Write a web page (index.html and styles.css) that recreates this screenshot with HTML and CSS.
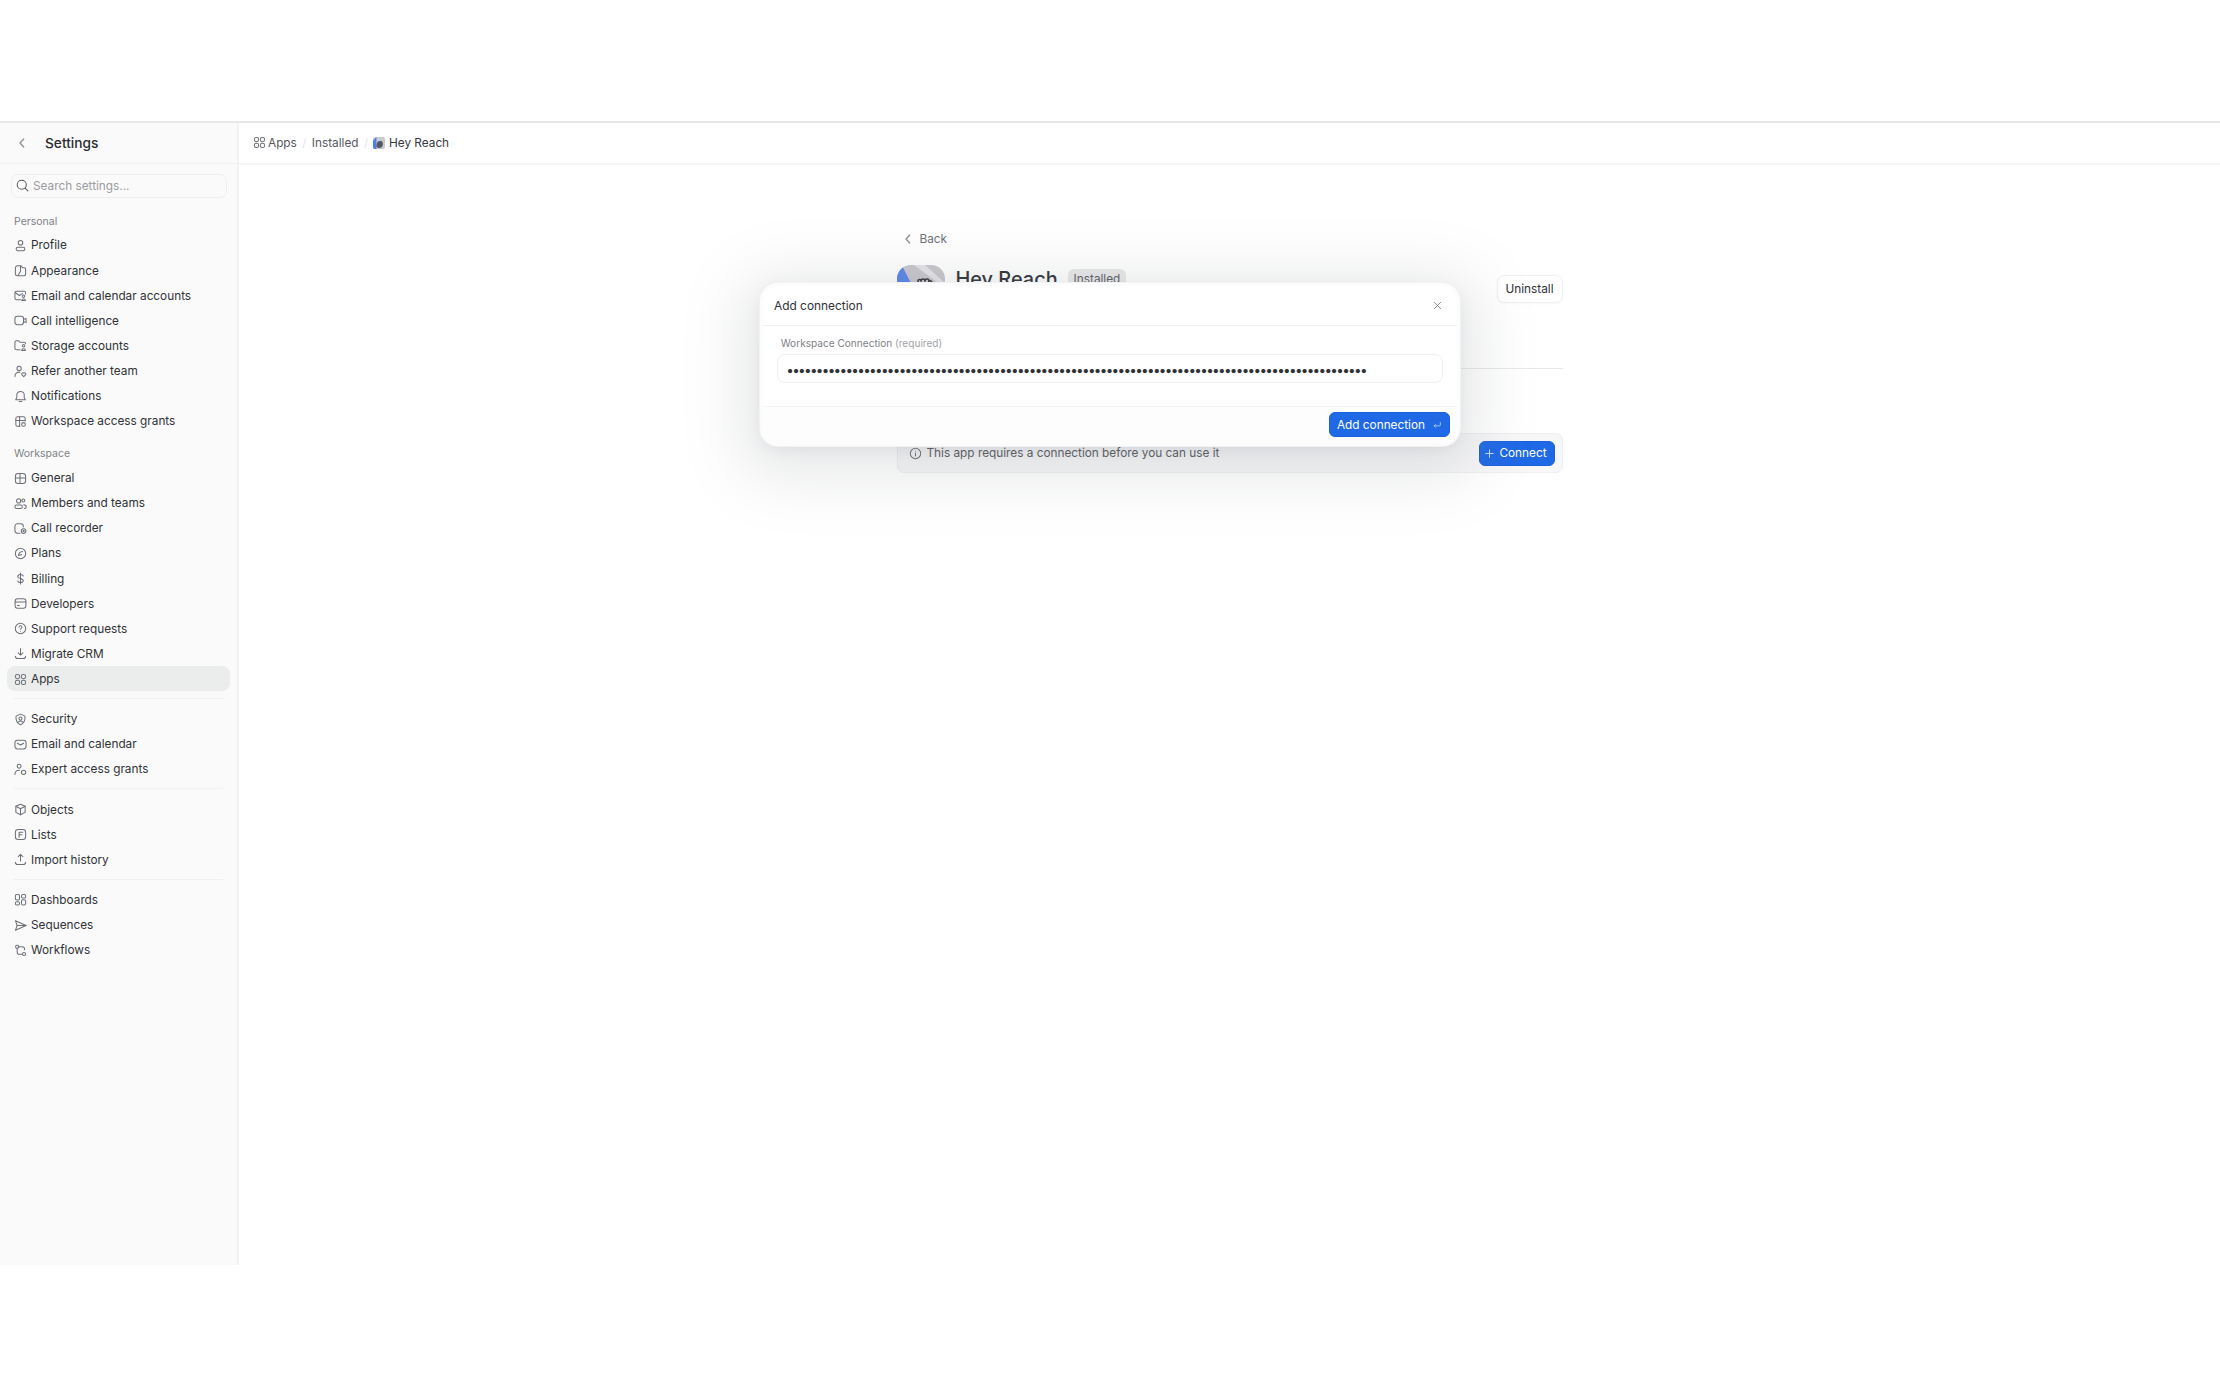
FILE: index.html
```html
<!DOCTYPE html>
<html lang="en">
<head>
<meta charset="utf-8">
<title>Settings</title>
<link rel="stylesheet" href="styles.css">
</head>
<body>
<svg class="defs" width="0" height="0" aria-hidden="true">
<defs>
<symbol id="i-apps" viewBox="0 0 14 14"><rect x="1.5" y="1.5" width="4.6" height="4.6" rx="2"/><rect x="7.9" y="1.5" width="4.6" height="4.6" rx="2"/><rect x="1.5" y="7.9" width="4.6" height="4.6" rx="2"/><rect x="7.9" y="7.9" width="4.6" height="4.6" rx="2"/></symbol>
</defs>
</svg>
<div class="topgap"></div>
<div class="shell">
  <aside class="sidebar">
    <div class="side-head">
      <svg class="chev" viewBox="0 0 10 10"><path d="M6.2 2.2 3.6 5l2.6 2.8"/></svg>
      <span class="side-title">Settings</span>
    </div>
    <div class="side-body">
      <div class="search">
        <svg class="ic search-ic" viewBox="0 0 14 14"><circle cx="6.2" cy="6.2" r="4.9"/><path d="m9.8 9.8 3 3"/></svg>
        <span>Search settings...</span>
      </div>
      <div class="section-label first">Personal</div>
      <a class="item"><svg class="ic" viewBox="0 0 14 14"><circle cx="7" cy="4" r="2.5"/><rect x="2.3" y="9" width="9.4" height="3.6" rx="1.8"/></svg>Profile</a>
      <a class="item"><svg class="ic" viewBox="0 0 14 14"><path d="M4 1.8h3.2l2 2.2H11a1.5 1.5 0 0 1 1.5 1.5v5.3a1.8 1.8 0 0 1-1.8 1.8H3.3a1.8 1.8 0 0 1-1.8-1.8V4.3A2.5 2.5 0 0 1 4 1.8Z"/><path d="M7 1.8v6l-2.5 4.4"/></svg>Appearance</a>
      <a class="item"><svg class="ic" viewBox="0 0 14 14"><path d="M7 11.5H2.6a1.6 1.6 0 0 1-1.6-1.6V4A1.6 1.6 0 0 1 2.6 2.4h8.3A1.6 1.6 0 0 1 12.5 4v1.5"/><path d="m1.5 4 4.3 3L9 5"/><circle cx="10.3" cy="7.8" r="1.3"/><path d="M8.3 12.3c0-2.2 4-2.2 4 0Z"/></svg>Email and calendar accounts</a>
      <a class="item"><svg class="ic" viewBox="0 0 14 14"><rect x="1" y="2.5" width="9.3" height="9" rx="2.5"/><path d="m10.3 6 2.7-1.3v4.6L10.3 8"/></svg>Call intelligence</a>
      <a class="item"><svg class="ic" viewBox="0 0 14 14"><path d="M6.5 11.5H2.6A1.6 1.6 0 0 1 1 9.9V3.6A1.6 1.6 0 0 1 2.6 2h2.6l1.3 1.5h4.4a1.6 1.6 0 0 1 1.6 1.6"/><circle cx="10.3" cy="7.3" r="1.3"/><path d="M8.3 12.3c0-2.4 4-2.4 4 0Z"/></svg>Storage accounts</a>
      <a class="item"><svg class="ic" viewBox="0 0 14 14"><circle cx="5.5" cy="3.7" r="2.3"/><path d="M1 12.3c0-3.2 2-4.8 5.5-4.6"/><path d="M10.5 12.6 8.4 10.4a1.3 1.3 0 0 1 2.1-1.5 1.3 1.3 0 0 1 2.1 1.5Z"/></svg>Refer another team</a>
      <a class="item"><svg class="ic" viewBox="0 0 14 14"><path d="M7 1.5a4 4 0 0 1 4 4v2.7l1.2 2.3H1.8L3 8.2V5.5a4 4 0 0 1 4-4Z"/><path d="M5.6 12.5h2.8"/></svg>Notifications</a>
      <a class="item"><svg class="ic" viewBox="0 0 14 14"><path d="M6.5 12H3.6A1.6 1.6 0 0 1 2 10.4V3.6A1.6 1.6 0 0 1 3.6 2h6.8A1.6 1.6 0 0 1 12 3.6v2.9"/><path d="M2 6h10M6 2v10"/><circle cx="10.2" cy="10.2" r="2"/></svg>Workspace access grants</a>

      <div class="section-label">Workspace</div>
      <a class="item"><svg class="ic" viewBox="0 0 14 14"><rect x="1.5" y="1.5" width="11" height="11" rx="3"/><path d="M1.5 6.5h11M6.5 1.5v11"/></svg>General</a>
      <a class="item"><svg class="ic" viewBox="0 0 14 14"><circle cx="5" cy="4.2" r="2.2"/><circle cx="10" cy="3.8" r="1.6"/><rect x="1" y="8.6" width="8" height="3.8" rx="1.9"/><path d="M10.5 8.3c1.5 0 2.7 1 2.7 2.4s-.8 1.7-2 1.7"/></svg>Members and teams</a>
      <a class="item"><svg class="ic" viewBox="0 0 14 14"><path d="M6.5 12H3.5A2.5 2.5 0 0 1 1 9.5v-5A2.5 2.5 0 0 1 3.5 2h4A2.5 2.5 0 0 1 10 4.5v.8"/><circle cx="10.3" cy="9.8" r="2.5"/><circle cx="10.3" cy="9.8" r=".7"/></svg>Call recorder</a>
      <a class="item"><svg class="ic" viewBox="0 0 14 14"><circle cx="7" cy="7" r="5.6"/><path d="M9.2 4.8 6 5.8 4.8 9.2l3.4-1.1"/></svg>Plans</a>
      <a class="item"><svg class="ic" viewBox="0 0 14 14"><path d="M10 4.3C9.7 3.2 8.5 2.6 7 2.6c-1.7 0-3 .8-3 2.2 0 3 6 1.5 6 4.4 0 1.4-1.3 2.2-3 2.2-1.5 0-2.7-.6-3-1.7M7 1v12"/></svg>Billing</a>
      <a class="item"><svg class="ic" viewBox="0 0 14 14"><rect x="1.2" y="2" width="11.6" height="10" rx="2.6"/><path d="M1.2 5.4h11.6M3.6 9.2h2.2"/></svg>Developers</a>
      <a class="item"><svg class="ic" viewBox="0 0 14 14"><circle cx="7" cy="7" r="5.6"/><path d="M5.5 5.5a1.5 1.5 0 1 1 2.3 1.3c-.5.3-.8.6-.8 1.1M7 9.9v.1"/></svg>Support requests</a>
      <a class="item"><svg class="ic" viewBox="0 0 14 14"><path d="M7 1.5v7M4.5 6.3 7 8.7l2.5-2.4M1.5 10c0 1.6.9 2.5 2.5 2.5h6c1.6 0 2.5-.9 2.5-2.5"/></svg>Migrate CRM</a>
      <a class="item active"><svg class="ic"><use href="#i-apps"/></svg>Apps</a>
      <div class="rule"></div>
      <a class="item"><svg class="ic" viewBox="0 0 14 14"><path d="M7 1.2 11.8 3.4c.5 4.3-1.1 7.6-4.8 9.4-3.7-1.8-5.3-5.1-4.8-9.4Z"/><circle cx="7" cy="6" r="1.7"/><path d="M4.8 9.6c.9-1.4 3.5-1.4 4.4 0"/></svg>Security</a>
      <a class="item"><svg class="ic" viewBox="0 0 14 14"><rect x="1" y="2.3" width="12" height="9.5" rx="2.8"/><path d="m3.6 5.6 3.4 2 3.4-2"/></svg>Email and calendar</a>
      <a class="item"><svg class="ic" viewBox="0 0 14 14"><circle cx="5.5" cy="3.5" r="2.1"/><path d="M1 12.3c0-3 2-4.8 5-4.5"/><circle cx="10.3" cy="10" r="2.3"/></svg>Expert access grants</a>
      <div class="rule"></div>
      <a class="item"><svg class="ic" viewBox="0 0 14 14"><path d="M7 1.3 12 3.5v6.6l-5 2.6-5-2.6V3.5Z"/><path d="M2 3.5 7 6.2l5-2.7M7 6.2v6.5"/></svg>Objects</a>
      <a class="item"><svg class="ic" viewBox="0 0 14 14"><rect x="1.5" y="1.5" width="11" height="11" rx="3"/><path d="M5.5 4.5V10M5.5 4.5h4M5.5 7.2h3"/></svg>Lists</a>
      <a class="item"><svg class="ic" viewBox="0 0 14 14"><path d="M7 8.7v-7M4.5 3.9 7 1.5l2.5 2.4M1.5 10c0 1.6.9 2.5 2.5 2.5h6c1.6 0 2.5-.9 2.5-2.5"/></svg>Import history</a>
      <div class="rule"></div>
      <a class="item"><svg class="ic" viewBox="0 0 14 14"><rect x="1.5" y="1.5" width="4.4" height="6" rx="1.5"/><rect x="8.1" y="1.5" width="4.4" height="4" rx="1.5"/><rect x="1.5" y="9.3" width="4.4" height="3.5" rx="1.5"/><rect x="8.1" y="7.3" width="4.4" height="5.5" rx="1.5"/></svg>Dashboards</a>
      <a class="item"><svg class="ic" viewBox="0 0 14 14"><path d="M1.5 1.8 13 7 1.5 12.2 3.4 7Z"/><path d="M3.4 7H13"/></svg>Sequences</a>
      <a class="item"><svg class="ic" viewBox="0 0 14 14"><rect x="1.8" y="1.3" width="3.2" height="3.2" rx="1.2"/><circle cx="10.8" cy="10.8" r="1.7"/><path d="M3.4 4.5v4.3c0 1.6.9 2.2 2.2 2.2h3.3M5 3h4c1.5 0 2.3.7 2.3 2.3v1"/></svg>Workflows</a>
    </div>
  </aside>
  <main class="main">
    <nav class="crumbs">
      <svg class="ic"><use href="#i-apps"/></svg>
      <span class="crumb">Apps</span>
      <span class="sep">/</span>
      <span class="crumb">Installed</span>
      <span class="sep">/</span>
      <svg class="logo-sm" viewBox="0 0 14 14"><rect width="14" height="14" rx="3" fill="#c9c9cf"/><path d="M0 4 4 0v14H3a3 3 0 0 1-3-3Z" fill="#4f7fe6"/><path d="M4 11c0-5 2-7 6-6 2 .6 2 5 0 7-2 1.5-5 1-6-1Z" fill="#55585f"/></svg>
      <span class="crumb strong">Hey Reach</span>
    </nav>
    <div class="content">
      <div class="column">
        <div class="back">
          <svg class="chev" viewBox="0 0 10 10"><path d="M6.2 2.2 3.6 5l2.6 2.8"/></svg>
          <span>Back</span>
        </div>
        <header class="app-head">
          <svg class="app-logo" viewBox="0 0 48 48"><rect width="48" height="48" rx="14" fill="#c9c7cc"/><path d="M0 14A14 14 0 0 1 6 2.5L16 22v26H0Z" fill="#5a86ea"/><path d="M17 0h11l20 18v5Z" fill="#e5e4e7"/><path d="M21 24v-8a1.5 1.5 0 0 1 3 0 2 2 0 0 1 4 0 2 2 0 0 1 4 0 2 2 0 0 1 3 1.5V24" fill="none" stroke="#34363b" stroke-width="1.6"/><path d="M24 16v5M28 16v5M32 16v5" stroke="#34363b" stroke-width="1.2"/></svg>
          <div class="app-title">
            <h1>Hey Reach</h1>
            <span class="badge">Installed</span>
          </div>
          <button class="ghost">Uninstall</button>
        </header>
        <div class="divider"></div>
        <div class="notice">
          <svg class="ic" viewBox="0 0 14 14"><circle cx="7" cy="7" r="5.6"/><path d="M7 6.5v3.2M7 4.3v.1"/></svg>
          <span class="notice-text">This app requires a connection before you can use it</span>
          <button class="primary connect"><svg class="plus" viewBox="0 0 12 12"><path d="M6 1.5v9M1.5 6h9"/></svg>Connect</button>
        </div>
      </div>
    </div>
  </main>
</div>
<section class="modal">
  <div class="modal-head">
    <span>Add connection</span>
    <svg class="close" viewBox="0 0 10 10"><path d="m1.2 1.2 7.6 7.6M8.8 1.2 1.2 8.8"/></svg>
  </div>
  <div class="modal-body">
    <label class="field-label">Workspace Connection <em>(required)</em></label>
    <div class="input"><span class="dots">••••••••••••••••••••••••••••••••••••••••••••••••••••••••••••••••••••••••••••••••••••••••••••••••••</span></div>
  </div>
  <div class="modal-foot">
    <button class="primary">Add connection<svg class="enter" viewBox="0 0 12 12"><path d="M10 2.5V6a1 1 0 0 1-1 1H2.5M4.5 5 2.5 7l2 2"/></svg></button>
  </div>
</section>
</body>
</html>
```
FILE: styles.css
```css
* { box-sizing: border-box; }
html, body { margin: 0; padding: 0; background: #fff; height: 100%; overflow: hidden; }
body { font-family: Inter, "Liberation Sans", sans-serif; color: #2f3136; font-size: 11.8px; position: relative; }
.defs { position: absolute; }
.topgap { height: 123px; border-bottom: 2px solid #e6e7e9; }
.shell { display: flex; height: 1142px; }

.ic { width: 13px; height: 13px; flex: none; fill: none; stroke: #6d7077; stroke-width: 1.1; stroke-linecap: round; stroke-linejoin: round; }
.chev { width: 14px; height: 14px; flex: none; fill: none; stroke: #93959a; stroke-width: 1; stroke-linecap: round; stroke-linejoin: round; }

.sidebar { width: 239px; flex: none; background: #fafafa; border-right: 2px solid #f2f2f3; display: flex; flex-direction: column; }
.side-head { height: 41px; flex: none; display: flex; align-items: center; gap: 16px; padding-left: 15px; border-bottom: 1px solid #f0f0f1; }
.side-title { font-size: 13.7px; font-weight: 500; color: #2a2c31; }
.side-body { padding: 9.7px 7px 0; display: flex; flex-direction: column; }
.search { height: 24px; margin: 0 3px 0 4px; display: flex; align-items: center; gap: 4.5px; padding: 0 3.5px; border: 1px solid #eeeeef; border-radius: 7px; background: #fafafa; color: #9a9ca1; font-size: 11.8px; }
.search-ic { stroke: #55575c; }
.section-label { height: 22px; margin-top: 9.6px; padding-left: 7px; display: flex; align-items: center; font-size: 10.5px; color: #808287; }
.section-label.first { margin-top: 12.6px; }
.item { height: 25.14px; display: flex; align-items: center; gap: 4px; padding: 1.2px 0 0 7px; font-size: 11.8px; color: #303237; border-radius: 8px; }
.item.active { background: #ebecec; }
.rule { height: 1px; background: #f0f0f1; margin: 7px; }

.main { flex: 1; display: flex; flex-direction: column; min-width: 0; }
.crumbs { height: 41.5px; flex: none; display: flex; align-items: center; padding-left: 13.5px; border-bottom: 2px solid #f5f5f6; font-size: 11.8px; color: #56585e; }
.crumbs .ic { margin-right: 2.5px; }
.sep { color: #e3e4e6; margin: 0 5.5px; font-size: 11px; }
.logo-sm { width: 12px; height: 12px; margin-right: 3.5px; flex: none; }
.strong { color: #36383d; }

.content { flex: 1; display: flex; justify-content: center; }
.column { width: 666px; padding-top: 66px; }
.back { display: flex; align-items: center; gap: 5px; margin-left: 4px; font-size: 11.8px; color: #6f7177; height: 16px; }
.app-head { display: flex; align-items: center; margin-top: 18px; height: 48px; }
.app-logo { width: 48px; height: 48px; flex: none; }
.app-title { flex: 1; display: flex; align-items: center; gap: 10px; margin: -19px 0 0 11px; }
h1 { font-size: 19.9px; font-weight: 500; margin: 0; color: #33353a; }
.badge { font-size: 11.8px; background: #e9e9ea; color: #5c5e64; height: 20px; display: flex; align-items: center; padding: 0 6px; border-radius: 6px; }
.ghost { font: inherit; color: #303237; background: #fff; border: 1px solid #f0f0f1; border-radius: 7px; height: 28px; width: 66px; padding: 0; box-shadow: 0 1px 2px rgba(0,0,0,.03); }
.divider { height: 1px; background: #e9e9ea; margin-top: 55px; }
.notice { height: 40px; margin-top: 64.7px; display: flex; align-items: center; padding: 0 7px 0 11px; background: #f7f7f8; border: 1px solid #eeeff0; border-radius: 7px; }
.notice-text { flex: 1; margin-left: 5px; color: #55575c; }
.primary { font: inherit; color: #fff; background: #1f69e6; border: 1px solid #1a62dc; border-radius: 6px; height: 25px; padding: 0 7px; display: inline-flex; align-items: center; gap: 6px; }
.connect { padding-left: 3.5px; gap: 4.7px; }
.plus { width: 11px; height: 11px; fill: none; stroke: #c4d8fb; stroke-width: 1.1; }

.modal { position: absolute; left: 763px; top: 285.5px; width: 694px; height: 157.5px; display: flex; flex-direction: column; background: #fff; border-radius: 15px; box-shadow: 0 0 0 3px #fcfcfc, 0 0 0 4px #f1f2f3, 0 12px 60px 22px rgba(120,125,135,.18), 0 4px 16px rgba(120,125,135,.16); }
.modal-head { height: 40px; flex: none; display: flex; align-items: center; justify-content: space-between; padding: 0 15px 0 11px; border-bottom: 1px solid #f0f0f1; font-size: 11.9px; color: #2f3136; }
.close { width: 9px; height: 9px; fill: none; stroke: #85878c; stroke-width: 1; }
.modal-body { flex: 1; padding: 9.6px 14.3px 0; }
.field-label { display: block; font-size: 10.1px; color: #808287; padding-left: 3.4px; height: 16px; line-height: 16px; }
.field-label em { font-style: normal; color: #a2a4a8; }
.input { height: 29px; margin-top: 3px; border: 1px solid #f0f0f1; border-radius: 8px; padding: 2px 8px 0; display: flex; align-items: center; overflow: hidden; }
.dots { font-size: 13.5px; letter-spacing: -1.68px; color: #2f3136; white-space: nowrap; }
.modal-foot { height: 37.5px; flex: none; display: flex; align-items: center; justify-content: flex-end; padding: 0 7px; background: #fdfdfd; border-top: 1px solid #f3f3f4; border-radius: 0 0 15px 15px; }
.modal-foot .primary { gap: 7px; }
.enter { width: 10px; height: 10px; fill: none; stroke: #b9d0fa; stroke-width: 1; }
```
